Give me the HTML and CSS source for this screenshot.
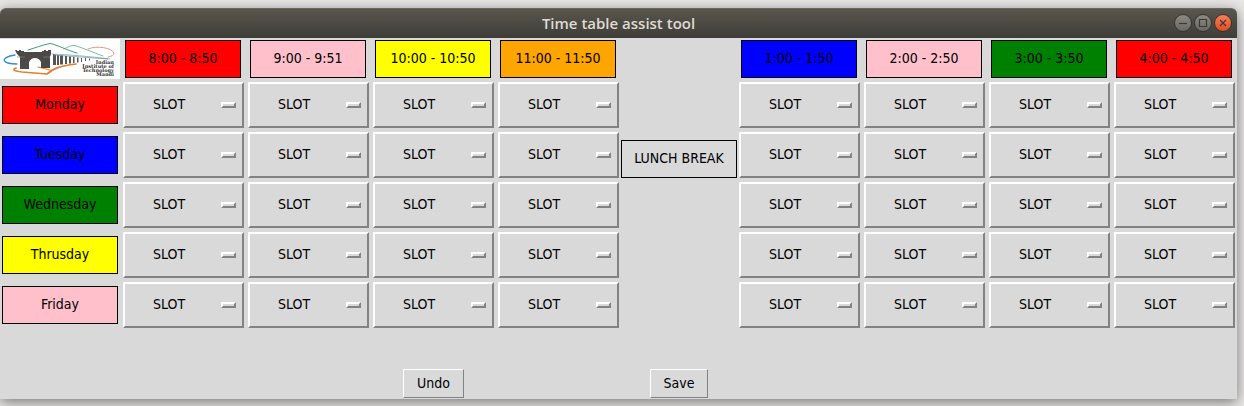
FILE: index.html
```html
<!DOCTYPE html>
<html lang="en">
<head>
<meta charset="utf-8">
<title>Time table assist tool</title>
<link rel="stylesheet" href="styles.css">
<script src="timetable.js" defer></script>
</head>
<body>
<main class="window">
  <header class="titlebar">
    <h1 class="title">Time table assist tool</h1>
    <div class="controls">
      <button class="control" type="button" aria-label="Minimize"><svg viewBox="0 0 16 16"><path d="M4 8.500h8"/></svg></button>
      <button class="control" type="button" aria-label="Maximize"><svg viewBox="0 0 16 16"><path d="M4.500 4.500h7v7h-7z"/></svg></button>
      <button class="control close" type="button" aria-label="Close"><svg viewBox="0 0 16 16"><path d="M5 5l6 6M11 5l-6 6"/></svg></button>
    </div>
  </header>
  <table class="timetable columns">
    <thead>
      <tr>
        <td class="logo-cell">
          <svg class="logo" viewBox="0 0 120 40" preserveAspectRatio="none" role="img" aria-label="Indian Institute of Technology Mandi">
            <g fill="none" stroke-linecap="round">
              <path d="M28 11C35 9 42 6 50 4.500C58 6 66 11 77 14" stroke="#3f9a74" stroke-width="1"/>
              <path d="M64 10C68 8 71 6 75 6.500C83 9 92 13 103 17" stroke="#58aa87" stroke-width=".8"/>
              <path d="M88 10C97 6 112 9 114 14Q114 17 108 18" stroke="#d58d78" stroke-width=".9"/>
              <path d="M15 16C7 17 3 20 4.500 22Q7 25 17 25" stroke="#2f91cf" stroke-width="1.300"/>
              <path d="M52 15Q78 16 110 20" stroke="#72b8df" stroke-width=".9"/>
              <path d="M16 29C12 31 14 32 22 33L47 35C53 30 58 27 76 25" stroke="#df812f" stroke-width="1.700"/>
              <path d="M38 28L50 31" stroke="#df812f" stroke-width="1.200"/>
            </g>
            <path fill="#4b4948" d="M15 11h2v1h2v-1h2v1h3v1h18v-1h2v-1h2v1h2v-1h3v4l-1 3v11h-9v-6q-2-4-6-4t-6 4v7h-9v-12l-3-3z"/>
            <path d="M17 18h8M43 18h7" stroke="#858280" stroke-width=".7"/>
            <path fill="#555" d="M53 15l3 1v10h-3zM57 16l2 .5v9.500h-2zM60 16.500h3v9h-3zM65 17h2v8h-2zM69 17.500h2v7h-2zM73 18h1.500v6h-1.500zM77 18.500h1.500v5h-1.500zM81 19h1v4h-1zM85 19h1v3h-1zM89 19.500h1v2h-1z"/>
            <path d="M53 16L108 20" stroke="#777" stroke-width=".6"/>
            <g class="logo-text" text-anchor="end">
              <text x="114" y="25">Indian</text>
              <text x="114" y="29">Institute of</text>
              <text x="114" y="33">Technology</text>
              <text x="114" y="37">Mandi</text>
            </g>
          </svg>
        </td>
        <th class="heading red" scope="col">8:00 - 8:50</th>
        <th class="heading pink" scope="col">9:00 - 9:51</th>
        <th class="heading yellow" scope="col">10:00 - 10:50</th>
        <th class="heading orange" scope="col">11:00 - 11:50</th>
        <th class="lunch" scope="col" rowspan="5">LUNCH BREAK</th>
        <th class="heading blue" scope="col">1:00 - 1:50</th>
        <th class="heading pink" scope="col">2:00 - 2:50</th>
        <th class="heading green" scope="col">3:00 - 3:50</th>
        <th class="heading red" scope="col">4:00 - 4:50</th>
      </tr>
    </thead>
    <tbody id="days"></tbody>
  </table>
  <footer class="actions columns">
    <button class="action undo" type="button">Undo</button>
    <button class="action save" type="button">Save</button>
  </footer>
</main>
</body>
</html>
```
FILE: styles.css
```css
*,
*::after { box-sizing: border-box; }

body {
  margin: 0;
  padding: 8px 7px 7px 0;
  background: #e9e8e7;
  color: #000;
  font: 14px/16px "DejaVu Sans Condensed", "DejaVu Sans", sans-serif;
  overflow: hidden;
}

.window {
  background: #d9d9d9;
  border-radius: 6px 6px 0 0;
  box-shadow: 0 3px 14px rgba(0, 0, 0, 0.5);
}

.titlebar {
  display: grid;
  grid-template-columns: 1fr auto 1fr;
  align-items: center;
  height: 30px;
  padding: 0 5px 2px;
  border-top: 1px solid #69665c;
  border-radius: 6px 6px 0 0;
  background: linear-gradient(#58564d, #3e3d38);
}

.title {
  grid-column: 2;
  margin: 0;
  color: #dfdbd2;
  font: 600 15px/20px "Open Sans", "Noto Sans", sans-serif;
}

.controls {
  display: flex;
  gap: 2px;
  justify-content: flex-end;
}

.control {
  width: 18px;
  height: 18px;
  padding: 0;
  border: 1px solid #36352f;
  border-radius: 50%;
  background: linear-gradient(#8b8982, #6b6963);
}

.control svg {
  display: block;
  width: 16px;
  height: 16px;
  fill: none;
  stroke: #3b3934;
  stroke-width: 1.2;
}

.control.close { background: linear-gradient(#f58059, #de4d20); }

.columns {
  display: grid;
  grid-template-columns: 121fr repeat(4, 125fr) 116fr repeat(4, 125fr);
}

.timetable { grid-template-rows: 42px repeat(5, 50px); }

.timetable thead,
.timetable tbody,
.timetable tr { display: contents; }

.timetable th,
.timetable td { padding: 0; font-weight: 400; }

.timetable .logo-cell { padding: 1px 1px 1px 0; }

.logo {
  display: block;
  width: 100%;
  height: 40px;
  background: #fff;
}

.logo-text {
  fill: #333;
  font: 700 5px "DejaVu Serif", serif;
}

.timetable .heading,
.timetable .day,
.timetable .lunch {
  display: flex;
  align-items: center;
  justify-content: center;
  height: 38px;
  padding-bottom: 2px;
  border: 1px solid #000;
  white-space: nowrap;
}

.heading { margin: 2px 5px 2px 4px; }

.day {
  align-self: center;
  margin: 0 3px 0 2px;
}

.lunch {
  grid-column: 6;
  grid-row: 1 / span 5;
  align-self: center;
}

.red { background: #f00; }
.pink { background: #ffc0cb; }
.yellow { background: #ff0; }
.orange { background: #ffa500; }
.blue { background: #00f; }
.green { background: #008000; }

.slot-cell { display: grid; }

.slot {
  display: grid;
  position: relative;
  margin: 2px;
}

.slot select {
  appearance: none;
  width: 100%;
  margin: 0;
  padding: 0 24px 2px 28px;
  border: 2px solid;
  border-color: #fff #828282 #828282 #fff;
  border-radius: 0;
  background: #d9d9d9;
  color: #000;
  font: inherit;
}

.slot::after {
  content: "";
  position: absolute;
  top: 20px;
  right: 8px;
  width: 15px;
  height: 6px;
  border: 2px solid;
  border-color: #fff #828282 #828282 #fff;
  pointer-events: none;
}

.actions {
  justify-items: center;
  padding: 39px 0 1px;
}

.action {
  height: 29px;
  padding: 0 13px 2px;
  border: 1px solid;
  border-color: #fff #828282 #828282 #fff;
  border-radius: 0;
  background: #d9d9d9;
  color: #000;
  font: inherit;
}

.undo { grid-column: 4; }
.save { grid-column: 6; }
```
FILE: timetable.js
```js
const days = [
  ["Monday", "red"],
  ["Tuesday", "blue"],
  ["Wednesday", "green"],
  ["Thrusday", "yellow"],
  ["Friday", "pink"],
];

const slotCell = (day, n) =>
  `<td class="slot-cell"><label class="slot"><select aria-label="${day} period ${n}"><option>SLOT</option></select></label></td>`;

document.getElementById("days").innerHTML = days
  .map(([day, color], i) => {
    const cells = [1, 2, 3, 4, 5, 6, 7, 8].map((n) => slotCell(day, n));
    // The lunch cell covers every row but the last, which needs a blank in its place.
    if (i === days.length - 1) cells.splice(4, 0, "<td></td>");
    return `<tr><th class="day ${color}" scope="row">${day}</th>${cells.join("")}</tr>`;
  })
  .join("");
```
